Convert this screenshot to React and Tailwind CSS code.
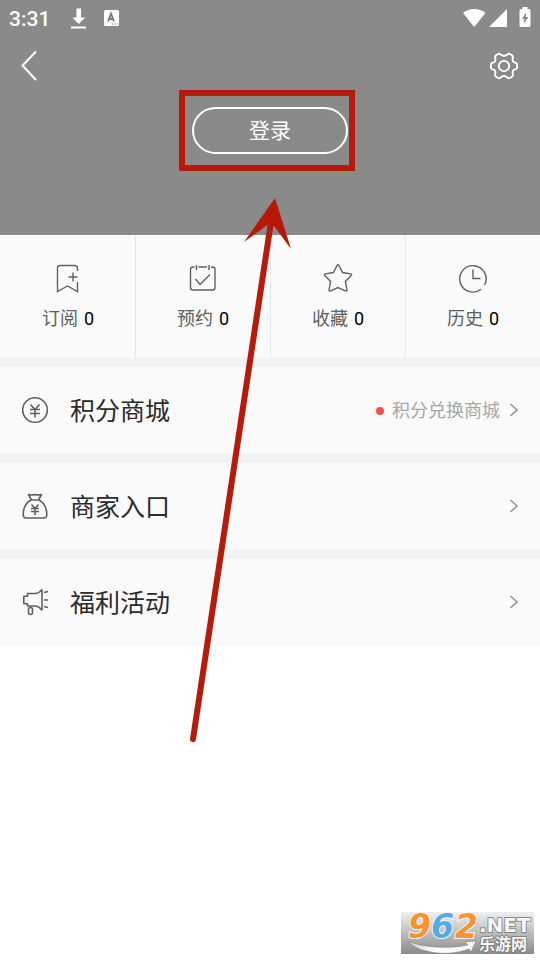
const cjk = "font-['Roboto','Noto_Sans_CJK_SC',sans-serif]";

function StatusBar() {
  return (
    <div className="flex h-9 items-center justify-between pl-[9px] pr-2 text-white">
      <div className="flex items-center">
        <span className="w-[60px] pt-[2px] text-[21px] leading-9 font-medium">3:31</span>
        <svg className="h-6 w-5" viewBox="0 0 20 24" fill="currentColor" aria-label="下载">
          <path d="M7.500 2.500h4.500v9h4.200l-6.400 6.500-6.400-6.500h4.100zM2 20.500h15v2H2z" />
        </svg>
        <svg className="ml-3 h-6 w-5" viewBox="0 0 20 24" aria-label="输入法">
          <rect x="3" y="4" width="15" height="16" rx="1.500" fill="currentColor" />
          <path d="M7 15.500l3-8 3 8M8 13h4" fill="none" stroke="#777" strokeWidth="1.800" />
          <path d="M11 18h1.200M13.300 18h1.200M15.500 18h1.200" stroke="#777" strokeWidth="1" />
        </svg>
      </div>
      <svg className="h-6 w-[70px]" viewBox="0 0 70 24" fill="currentColor" aria-label="网络与电量">
        <path d="M1 7C7 1.500 17.500 1.500 23.500 7L12.200 21z" />
        <path d="M45 3v18H27z" />
        <path d="M60.500 1h5v2H67q1.500 0 1.500 1.500v15Q68.500 21 67 21h-8q-1.500 0-1.500-1.500v-15Q57.500 3 59 3h1.500z" />
        <path d="M64.500 6l-4.500 7h2.500l-.8 5 4.600-7h-2.600z" fill="#868686" />
      </svg>
    </div>
  );
}

function Bookmark() {
  return (
    <>
      <path d="M26.500 10V7.500Q26.500 4.500 23.500 4.500H9Q6.500 4.500 6.500 7v23.500l10-5.500 10 5.500V21" />
      <path d="M22 11.500v9M17.500 16h9" />
    </>
  );
}

function Calendar() {
  return (
    <>
      <path d="M8.500 6H7Q4.500 6 4.500 8.500v18Q4.500 29 7 29h19.500q2.500 0 2.500-2.500v-18Q29 6 26.500 6H25M12.500 6h8.500" />
      <path d="M10.500 4v5M23 4v5M9.500 18l4.500 5.500 10-10" />
    </>
  );
}

function Star() {
  return (
    <path d="M16 4.500q1-1.500 2 0l3.600 7 8 1.400q1.800.4.600 1.700l-5.800 5.900 1.500 8.200q.2 2-1.500 1.200L17 26.600l-7.400 3.300q-1.700.8-1.500-1.200l1.500-8.200-5.800-5.900q-1.200-1.300.6-1.700l8-1.400z" />
  );
}

function Clock() {
  return <path d="M25 28.300A13.200 13.200 0 1 1 28.600 24M17 8.500v9h7.500" />;
}

function Coin() {
  return (
    <>
      <circle cx="14" cy="13" r="12.300" />
      <path d="M9.500 7.500l4.500 5 4.500-5M14 12.500v8M9 12.500h10M9 16.500h10" />
    </>
  );
}

function MoneyBag() {
  return (
    <>
      <path d="M7.500 1.500q3 1 6.500 0 3 1 6.500 0l-3 5.500c5 1.500 8.500 8 8.300 15q-.3 3-2.800 3H5q-2.500 0-2.800-3C2 15 5.500 8.500 10.500 7zM10.500 7h7" />
      <path d="M10.500 11.500l3.500 4 3.500-4M14 15.500v6.500M10 15.500h8M10 18.500h8" />
    </>
  );
}

function Megaphone() {
  return (
    <>
      <path d="M21 .8v20.200Q18 17.500 15 17H6.500v-2.200H2.800V7.200h3.700V4.500H15Q18 4 21 .8z" />
      <path d="M23 3.500l4-1M23 11h4M23 17.500l4 1" />
      <rect x="7.500" y="18.500" width="4" height="7" rx="2" />
    </>
  );
}

const stats = [
  { label: "订阅", Icon: Bookmark },
  { label: "预约", Icon: Calendar },
  { label: "收藏", Icon: Star },
  { label: "历史", Icon: Clock },
];

const entries = [
  { label: "积分商城", note: "积分兑换商城", Icon: Coin },
  { label: "商家入口", Icon: MoneyBag },
  { label: "福利活动", Icon: Megaphone },
];

function Watermark() {
  return (
    <div className="absolute right-[6px] bottom-[6px] h-[42px] w-[133px] bg-linear-to-b from-[#f0f0f0] to-[#8c8c8c]">
      <svg className="h-full w-full overflow-visible" viewBox="0 0 133 42" role="img" aria-label="962.NET 乐游网">
        <defs>
          <linearGradient id="swoosh" x1="0" x2="1">
            <stop offset="0" stopColor="#ccc" />
            <stop offset="0.400" stopColor="#fff" />
            <stop offset="1" stopColor="#f5f5f5" />
          </linearGradient>
        </defs>
        <path d="M6 29C22 36 50 37 67 33l-3-3 11-1-5 11-2-3C50 44 20 43 6 29z" fill="url(#swoosh)" stroke="#777" strokeWidth="0.500" />
        <g stroke="#f8f8f8" strokeWidth="2" paintOrder="stroke" fontFamily="DejaVu Sans" fontWeight="700" fontStyle="italic" fontSize="33">
          <text x="7" y="26" fill="#f79432">9</text>
          <text x="30" y="26" fill="#57abe0">6</text>
          <text x="54" y="26" fill="#f79432">2</text>
        </g>
        <g fill="#f7f7f7" stroke="#777" strokeWidth="1.500" paintOrder="stroke" fontWeight="700">
          <text x="78" y="20" fontFamily="DejaVu Sans" fontSize="20">.NET</text>
          <text x="78" y="38" fontFamily="Noto Sans CJK SC" fontSize="16">乐游网</text>
        </g>
      </svg>
    </div>
  );
}

export default function App() {
  return (
    <div className={`relative min-h-screen w-full overflow-hidden bg-white ${cjk}`}>
      <header className="h-[235px] bg-[#8a8a8a]">
        <StatusBar />
        <div className="flex h-[60px] items-center justify-between px-5 text-white">
          <button type="button" aria-label="返回">
            <svg className="h-8 w-5" viewBox="0 0 20 32" fill="none" stroke="currentColor" strokeWidth="2">
              <path d="M16 1.500L2.500 15.500 16 30" />
            </svg>
          </button>
          <button type="button" aria-label="设置">
            <svg className="h-8 w-8" viewBox="-1 -1 34 34" fill="none" stroke="currentColor" strokeWidth="2" strokeLinejoin="round">
              <path d="M9.200 3.500Q11 2.300 12.500 3.800q3.500 3 7 0Q21 2.300 22.800 3.500l1.600 1q1.500 1 .9 3-.8 4.600 3.300 5.200 1.400.5 1.400 2.200v2.200q0 1.700-1.400 2.200-4.100.6-3.300 5.200.6 2-.9 3l-1.600 1q-1.800 1.200-3.300-.3-3.500-3-7 0-1.500 1.500-3.300.3l-1.600-1q-1.500-1-.9-3 .8-4.600-3.300-5.200Q2 18.800 2 17.100v-2.200q0-1.700 1.400-2.200 4.100-.6 3.300-5.200-.6-2 .9-3z" />
              <circle cx="16" cy="16" r="5.500" />
            </svg>
          </button>
        </div>
        <div className="flex justify-center">
          <div className="relative mt-[11px]">
            <button type="button" className="block h-[47px] w-[156px] rounded-full border-2 border-white text-[21px] leading-[42px] text-white">
              登录
            </button>
            <div className="pointer-events-none absolute -inset-y-[17px] -right-[7px] -left-[13px] border-[6px] border-[#b51a0b]" />
          </div>
        </div>
      </header>

      <main>
        <nav className="grid grid-cols-4 bg-[#fafafa]">
          {stats.map(({ label, Icon }) => (
            <button key={label} type="button" className="flex h-[123px] flex-col items-center border-l border-[#e6e7e9] pt-[26px] first:border-transparent">
              <svg className="h-[34px] w-[34px]" viewBox="0 0 34 34" fill="none" stroke="#606060" strokeWidth="1.400">
                <Icon />
              </svg>
              <span className="mt-[11px] flex items-center gap-[6px] text-lg leading-[26px] text-[#606060]">
                <span>{label}</span>
                <span className="text-black">0</span>
              </span>
            </button>
          ))}
        </nav>
        <ul>
          {entries.map(({ label, note, Icon }) => (
            <li key={label} className="border-t-[9px] border-[#f0f2f4] bg-[#fafafa]">
              <a href="#" className="flex h-[87px] items-center pr-5 pl-[21px]">
                <svg className="h-7 w-7" viewBox="0 0 28 28" fill="none" stroke="#606060" strokeWidth="1.600" strokeLinejoin="round">
                  <Icon />
                </svg>
                <span className="ml-[21px] pt-[2px] text-[25px] leading-9 text-[#2b2b2b]">{label}</span>
                <span className="ml-auto flex items-center text-lg leading-6 text-[#a6a6a6]">
                  {note && (
                    <>
                      <span className="mr-2 h-2 w-2 rounded-full bg-[#f35050]" />
                      <span>{note}</span>
                    </>
                  )}
                  <svg className="ml-2 h-4 w-3" viewBox="0 0 12 16" fill="none" stroke="#999" strokeWidth="1.700">
                    <path d="M2.500 1l6.500 6-6.500 6" />
                  </svg>
                </span>
              </a>
            </li>
          ))}
        </ul>
      </main>

      <svg className="pointer-events-none absolute top-[198px] left-1/2 -ml-[80px] h-[546px] w-[104px]" viewBox="190 198 104 546" aria-hidden="true">
        <path d="M271 222L193 739" stroke="#b51a0b" strokeWidth="6" strokeLinecap="round" />
        <path d="M275 198l16 51-17-23-6-1.500-24 17.500z" fill="#b81808" />
      </svg>
      <Watermark />
    </div>
  );
}
